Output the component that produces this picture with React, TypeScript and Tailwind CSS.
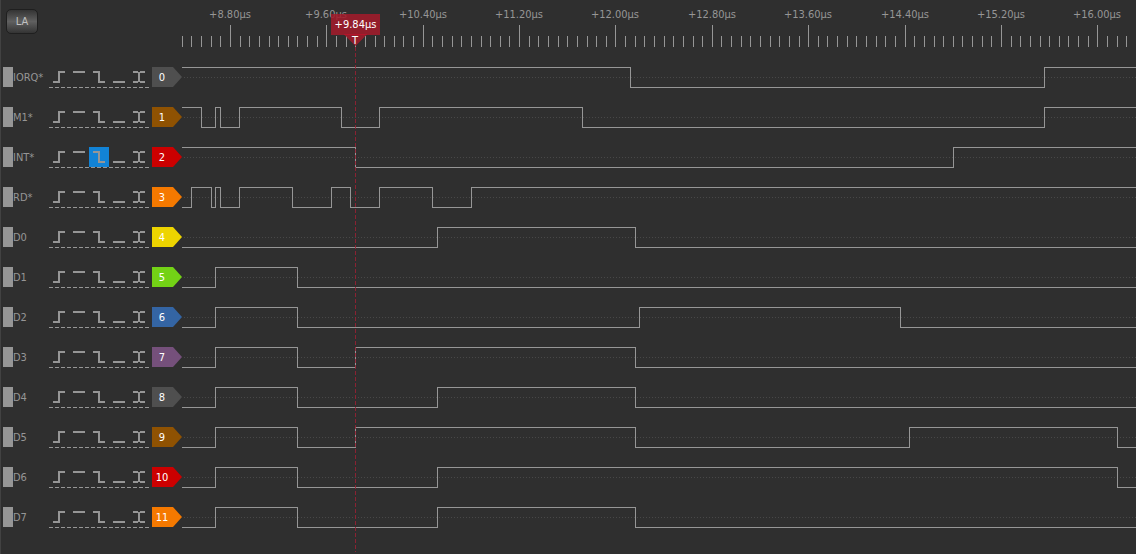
import { useState } from "react";

type TriggerKind = "rising" | "high" | "falling" | "low" | "change";

interface Channel {
  name: string;
  color: string;
  startsHigh: boolean;
  edges: number[];
  trigger?: TriggerKind;
}

const GRAY = "bg-[#4f4f4f]";
const BROWN = "bg-[#8f5202]";
const RED = "bg-[#cc0000]";
const ORANGE = "bg-[#f57900]";
const YELLOW = "bg-[#edd400]";
const GREEN = "bg-[#73d216]";
const BLUE = "bg-[#3465a4]";
const PURPLE = "bg-[#75507b]";

// Edge positions are measured from the left end of the trace area.
const channels: Channel[] = [
  { name: "IORQ*", color: GRAY, startsHigh: true, edges: [448, 862] },
  { name: "M1*", color: BROWN, startsHigh: true, edges: [19, 33, 38, 57, 159, 197, 400, 862] },
  { name: "INT*", color: RED, startsHigh: true, edges: [173, 771], trigger: "falling" },
  { name: "RD*", color: ORANGE, startsHigh: false, edges: [9, 29, 33, 38, 57, 110, 149, 168, 197, 250, 289] },
  { name: "D0", color: YELLOW, startsHigh: false, edges: [255, 453] },
  { name: "D1", color: GREEN, startsHigh: false, edges: [33, 115] },
  { name: "D2", color: BLUE, startsHigh: false, edges: [33, 115, 457, 718] },
  { name: "D3", color: PURPLE, startsHigh: false, edges: [33, 115, 173, 453] },
  { name: "D4", color: GRAY, startsHigh: false, edges: [33, 115, 255, 453] },
  { name: "D5", color: BROWN, startsHigh: false, edges: [33, 115, 173, 453, 727, 935] },
  { name: "D6", color: RED, startsHigh: false, edges: [33, 115, 255, 935] },
  { name: "D7", color: ORANGE, startsHigh: false, edges: [33, 115, 255, 453] },
];

const triggerShapes: { kind: TriggerKind; label: string; path: string }[] = [
  { kind: "rising", label: "rising edge", path: "M4 14h5V4h7v2h-5v10H4z" },
  { kind: "high", label: "high level", path: "M4 4h12v2H4z" },
  { kind: "falling", label: "falling edge", path: "M4 4h7v10h5v2H9V6H4z" },
  { kind: "low", label: "low level", path: "M4 14h12v2H4z" },
  { kind: "change", label: "any change", path: "M4 4h5v1h2v-1h5v2h-5v8h5v2h-5v-1h-2v1H4v-2h5V6H4z" },
];

const TICK_STEP = 9.637;
const FIRST_LABEL = 48;
const END = 4000;

function wavePath(startsHigh: boolean, edges: number[]) {
  let high = startsHigh;
  let d = `M-1 ${high ? 0 : 20}`;
  for (const x of edges) {
    high = !high;
    d += `H${x}V${high ? 0 : 20}`;
  }
  return `${d}H${END}`;
}

function Ruler() {
  const ticks = Array.from({ length: 104 }, (_, i) => {
    const k = i - 5;
    return { k, x: Math.round(FIRST_LABEL + k * TICK_STEP) };
  });
  return (
    <svg className="block h-12 w-full" role="img" aria-label="Time ruler">
      {ticks.map(({ k, x }) => (
        <g key={k}>
          <rect
            x={x}
            y={k % 10 === 0 ? 25 : 36}
            width="1"
            height={k % 10 === 0 ? 22 : 11}
            className="fill-[#969696]"
          />
          {k % 10 === 0 && (
            <text x={x} y="18" textAnchor="middle" className="fill-[#969696] text-[11px]">
              {`+${(8.8 + k * 0.08).toFixed(2)}µs`}
            </text>
          )}
        </g>
      ))}
    </svg>
  );
}

function Cursor() {
  return (
    <div className="pointer-events-none absolute top-0 bottom-0.5 left-[330px] flex w-[49px] flex-col pt-[14px]">
      <div className="flex h-[21px] shrink-0 items-center justify-center bg-[#a41a2a]/85 pt-0.5 text-[11px] text-white">
        +9.84µs
      </div>
      <svg className="block h-3 w-full shrink-0 overflow-visible" aria-hidden="true">
        <path d="M13.500 0H35.500L24.500 11z" className="fill-[#a41a2a]/85" />
        <path d="M13 -1H36V0H13z" className="fill-[#b5142a]" />
        <text x="24" y="9" textAnchor="middle" className="fill-white text-[11px]">
          T
        </text>
      </svg>
      <svg className="block min-h-0 w-full flex-1" aria-hidden="true">
        <path d="M24.500 0V4000" className="stroke-[#9a2032]/85" strokeDasharray="4 2" />
      </svg>
    </div>
  );
}

function ChannelRow({ channel, index }: { channel: Channel; index: number }) {
  const [active, setActive] = useState<TriggerKind | undefined>(channel.trigger);
  return (
    <li className="flex h-10 items-start pt-[10px]">
      <button type="button" aria-label={`Move ${channel.name}`} className="ml-[2px] h-5 w-[10px] shrink-0 bg-[#969696]" />
      <span className="flex h-[21px] w-9 shrink-0 items-center pt-0.5 text-[11px] whitespace-nowrap text-[#969696]">
        {channel.name}
      </span>
      <div className="flex h-[21px] shrink-0 flex-col">
        <div className="flex">
          {triggerShapes.map(({ kind, label, path }) => (
            <button
              key={kind}
              type="button"
              aria-label={`${channel.name} ${label}`}
              aria-pressed={active === kind}
              onClick={() => setActive(active === kind ? undefined : kind)}
              className={active === kind ? "size-5 bg-[#1283d6]" : "size-5"}
            >
              <svg viewBox="0 0 20 20" className="block size-5" shapeRendering="crispEdges" aria-hidden="true">
                <path d={path} className="fill-[#969696]" />
              </svg>
            </button>
          ))}
        </div>
        <div className="h-px bg-[repeating-linear-gradient(90deg,#969696_0_4px,transparent_4px_6px)]" />
      </div>
      <button
        type="button"
        aria-label={`Channel ${index}`}
        className={`ml-[3px] flex h-5 w-[30px] shrink-0 items-center justify-center pt-[3px] pr-[10px] text-[11px] text-white [clip-path:polygon(0_0,21px_0,100%_50%,21px_100%,0_100%)] ${channel.color}`}
      >
        {index}
      </button>
      <svg className="block h-[21px] min-w-0 flex-1" shapeRendering="crispEdges" role="img" aria-label={`${channel.name} trace`}>
        <g transform="translate(0.5 0.5)" fill="none">
          <path d={`M1.5 10H${END}`} className="stroke-[#484848]" strokeDasharray="1 2" />
          <path d={wavePath(channel.startsHigh, channel.edges)} className="stroke-[#969696]" />
        </g>
      </svg>
    </li>
  );
}

export default function App() {
  return (
    <main className="relative min-h-screen overflow-hidden border-l border-[#424242] bg-[#2f2f2f] font-['DejaVu_Sans_Condensed','Noto_Sans',sans-serif]">
      <header className="flex h-[57px] items-start">
        <div className="w-[181px] shrink-0 pt-[9px] pl-[5px]">
          <button
            type="button"
            className="flex h-[25px] w-8 items-center justify-center rounded-[5px] border border-[#1f1f1f] bg-linear-to-b from-[#343434] via-[#606060] to-[#343434] pt-0.5 text-[11px] text-[#c0c0c0]"
          >
            LA
          </button>
        </div>
        <div className="min-w-0 flex-1">
          <Ruler />
        </div>
      </header>
      <ul>
        {channels.map((channel, index) => (
          <ChannelRow key={channel.name} channel={channel} index={index} />
        ))}
      </ul>
      <Cursor />
    </main>
  );
}
